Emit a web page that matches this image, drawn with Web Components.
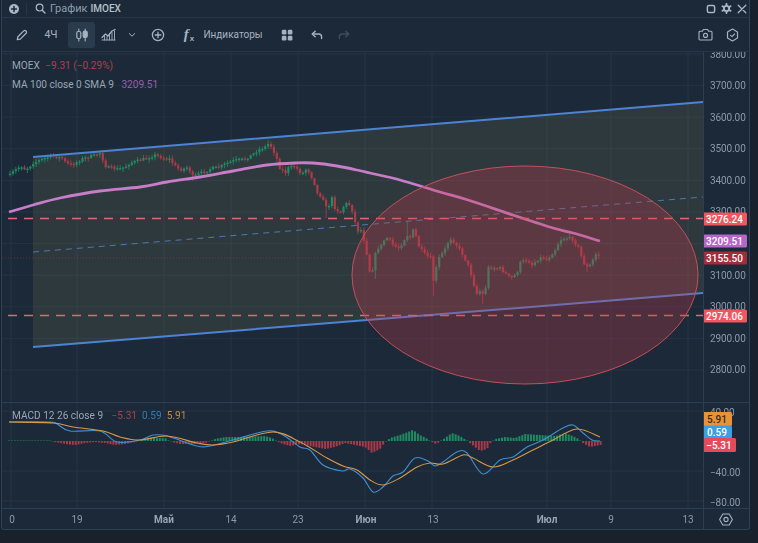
<!DOCTYPE html>
<html lang="ru"><head><meta charset="utf-8"><title>IMOEX</title>
<style>
html,body{margin:0;height:100%;background:#18212c;overflow:hidden}
body{padding-left:1px;box-sizing:border-box;font-family:Roboto,"Noto Sans",sans-serif}
</style></head><body>
<chart-window>
  <window-header slot="header"></window-header>
  <tool-bar slot="toolbar"></tool-bar>
  <main-pane slot="main"></main-pane>
  <macd-pane slot="macd"></macd-pane>
  <time-axis slot="time"></time-axis>
</chart-window>
<script>
const FONT='Roboto,"Noto Sans",sans-serif';
const ic=(w,h,body,extra='')=>`<svg width="${w}" height="${h}" viewBox="0 0 ${w} ${h}" fill="none" stroke="currentColor" stroke-linecap="round" stroke-linejoin="round" ${extra}>${body}</svg>`;
function shadow(el,html){el.attachShadow({mode:'open'}).innerHTML=html;}

const GRIDX=[11,77,164,231,298,365,432,547,611,688];
function smooth(p){
  let d=`M${p[0][0]} ${p[0][1]}`;
  for(let i=0;i<p.length-1;i++){
    const a=p[Math.max(i-1,0)],b=p[i],c=p[i+1],e=p[Math.min(i+2,p.length-1)];
    d+=`C${(b[0]+(c[0]-a[0])/6).toFixed(1)} ${(b[1]+(c[1]-a[1])/6).toFixed(1)} ${(c[0]-(e[0]-b[0])/6).toFixed(1)} ${(c[1]-(e[1]-b[1])/6).toFixed(1)} ${c[0]} ${c[1]}`;
  }
  return d;
}
function interp(pts,x){
  if(x<=pts[0][0])return pts[0][1];
  for(let i=1;i<pts.length;i++){if(x<=pts[i][0]){const a=pts[i-1],b=pts[i];return a[1]+(b[1]-a[1])*(x-a[0])/(b[0]-a[0]);}}
  return pts[pts.length-1][1];
}
const CLOSE=[[10,175],[14,171],[18,168],[21,166],[24,169],[28,168],[33,163],[40,160],[48,157],[50,156],[57,157],[62,158],[66,163],[72,165],[77,162],[82,159],[88,157],[95,155],[100,153],[103,160],[106,167],[112,168],[118,169],[125,167],[130,163],[140,160],[150,157],[155,155],[160,157],[167,159],[170,159],[174,165],[180,170],[188,167],[193,177],[200,173],[205,172],[212,168],[220,167],[225,164],[235,160],[245,159],[252,155],[258,150],[265,147],[269,143],[273,150],[276,156],[279,167],[282,170],[286,173],[288,168],[295,166],[298,170],[302,174],[307,168],[312,178],[315,185],[317,193],[323,198],[327,210],[332,198],[334,207],[340,213],[343,207],[348,202],[352,210],[354,217],[357,232],[360,228],[363,235],[365,247],[369,262],[370,277],[372,272],[375,255],[378,248],[382,245],[385,238],[388,238],[393,245],[398,248],[400,247],[407,235],[410,238],[414,228],[418,245],[423,252],[427,257],[430,253],[433,282],[437,265],[440,255],[443,253],[446,247],[450,238],[454,242],[458,247],[463,255],[468,265],[472,277],[474,285],[478,297],[481,287],[484,300],[488,268],[492,267],[495,268],[500,268],[505,273],[510,278],[513,277],[517,273],[520,263],[525,260],[530,262],[532,265],[537,260],[542,257],[547,260],[551,255],[555,250],[560,240],[565,238],[572,238],[574,242],[579,248],[583,262],[587,267],[590,265],[593,260],[596,254],[598,253],[601,260]];
const WICK={327:[0,218],407:[221,0],433:[0,296],484:[0,304],374:[0,279],269:[140,0],193:[0,181],587:[0,272]};
const MA=[[9,212],[33,205],[60,198],[100,191],[140,187],[167,182],[200,177],[233,171],[267,165],[295,163],[313,163],[337,166],[357,170],[370,173],[400,180],[440,192],[468,200],[513,215],[553,228],[573,233],[600,241]];
const BLUE=[[9,422],[50,422],[57,424],[70,431],[100,431],[117,442],[140,440],[153,435],[167,436],[197,446],[210,446],[233,440],[267,431],[283,435],[300,447],[310,450],[323,465],[342,471],[350,469],[363,478],[373,492],[383,487],[393,476],[403,472],[415,458],[428,461],[435,466],[443,462],[457,452],[467,453],[483,474],[500,460],[513,457],[527,447],[543,440],[563,428],[573,425],[583,433],[592,440],[600,441]];
const ORANGE=[[9,422],[53,423],[73,427],[103,431],[120,437],[140,440],[167,436],[197,443],[213,445],[233,442],[273,432],[300,442],[327,458],[343,466],[357,470],[370,480],[383,485],[400,478],[417,467],[430,463],[443,464],[463,455],[473,458],[493,467],[513,460],[533,450],[553,440],[577,429],[600,437]];
const HIST=[[9,.5],[45,.5],[50,.5],[55,-1],[65,-3],[75,-4],[85,-2],[95,-1],[105,-2],[115,-4],[125,-3],[135,-1],[140,1],[150,3],[165,3],[172,-1],[180,-3],[195,-3],[205,-2],[212,0],[215,2],[225,4],[240,4],[265,5],[272,3],[280,-2],[290,-5],[300,-3],[310,-5],[325,-8],[335,-6],[345,-2],[355,-4],[365,-6],[372,-12],[380,-8],[385,-1],[387,0],[390,3],[400,6],[413,11],[420,6],[428,2],[432,-1],[436,-3],[441,0],[445,3],[452,8],[460,5],[466,1],[470,-2],[480,-10],[487,-8],[491,-1],[495,2],[505,4],[515,3],[525,7],[540,6],[555,5],[565,8],[575,4],[580,1],[583,-2],[590,-6],[600,-4]];

function candles(){
  let seed=7;const rnd=()=>{seed=(seed*16807)%2147483647;return seed/2147483647;};
  let out='',prev=interp(CLOSE,9);
  for(let x=10;x<=601;x+=2.9){
    const c=interp(CLOSE,x)+(rnd()-.5)*2.6, o=prev;
    const up=c<=o, top=Math.min(o,c), bot=Math.max(o,c), h=Math.max(bot-top,1.4);
    const col=up?'#1f8c64':'#ad3a47';
    let wt=top-.6-rnd()*2.6, wb=top+h+.6+rnd()*2.6;
    const k=Object.keys(WICK).find(q=>Math.abs(q-x)<1.5);
    if(k){if(WICK[k][0])wt=WICK[k][0];if(WICK[k][1])wb=WICK[k][1];}
    out+=`<path d="M${x.toFixed(1)} ${wt.toFixed(1)}V${wb.toFixed(1)}" stroke="${col}" stroke-width=".8"/><rect x="${(x-1.1).toFixed(1)}" y="${top.toFixed(1)}" width="2.2" height="${h.toFixed(1)}" fill="${col}"/>`;
    prev=c;
  }
  return out;
}
function hist(){
  let out='';
  for(let x=9;x<=601;x+=2.9){
    const v=interp(HIST,x);
    const h=Math.max(Math.abs(v),.8),col=v>=0?'#1f8a62':'#a63a4a';
    out+=`<rect x="${(x-1).toFixed(1)}" y="${(v>=0?441-h:441).toFixed(1)}" width="2" height="${h.toFixed(1)}" fill="${col}" ${Math.abs(v)<1?'opacity=".6"':''}/>`;
  }
  return out;
}
const grid=(ys,y0,y1)=>GRIDX.map(x=>`<path d="M${x} ${y0}V${y1}"/>`).join('')+ys.map(y=>`<path d="M2 ${y}H703"/>`).join('');

class ChartWindow extends HTMLElement{constructor(){super();shadow(this,`<style>
:host{display:grid;box-sizing:border-box;width:749px;height:530px;background:#1c2938;border:1px solid #2c4258;border-width:0 1px 1px 1px;border-radius:0 0 3px 3px;
grid-template-rows:18px 34px 351px 106px 20px;font:10px ${FONT};color:#98a8b6;overflow:hidden;filter:blur(.4px)}
</style><slot name="header"></slot><slot name="toolbar"></slot><slot name="main"></slot><slot name="macd"></slot><slot name="time"></slot>`);}}
customElements.define('chart-window',ChartWindow);

class WindowHeader extends HTMLElement{constructor(){super();shadow(this,`<style>
:host{display:flex;align-items:center;border-bottom:1px solid #26374a;box-sizing:border-box;padding:0 0 0 6px;color:#a9b7c4}
.sep{width:1px;height:12px;background:#26374a;margin:0 8px 0 6px}
.t{font-size:11px;color:#8e9eac;margin-left:4px}.b{font-weight:500;font-size:10px;color:#b4c1cd;margin-left:3px}
.sp{flex:1}.i{display:flex;width:15px;justify-content:center}svg{display:block}
</style>
${ic(12,12,'<circle cx="6" cy="6" r="5" fill="currentColor" stroke="none"/><path d="M6 3.600v4.800M3.600 6h4.800" stroke="#1c2938" stroke-width="1.500"/>')}
<span class="sep"></span>
${ic(11,11,'<circle cx="4.600" cy="4.600" r="3.400" stroke-width="1.200"/><path d="M7.200 7.200l2.800 2.800" stroke-width="1.400"/>')}
<span class="t">График</span><span class="b">IMOEX</span><span class="sp"></span>
<span class="i">${ic(10,10,'<rect x="1.400" y="1.400" width="7.200" height="7.200" rx="1.600" stroke-width="1.500"/>')}</span>
<span class="i" style="margin-left:1px">${ic(11,11,'<circle cx="5.500" cy="5.500" r="2.600" stroke-width="1.900"/><path d="M5.500 .9v1.500M5.500 8.600v1.500M1.500 3.200l1.300.8M8.200 7l1.300.8M1.500 7.800l1.300-.8M8.200 4l1.300-.8" stroke-width="1.900"/>')}</span>
<span class="i" style="margin-left:0">${ic(10,10,'<path d="M1.200 1.200l7.600 7.600M8.800 1.200L1.200 8.800" stroke-width="1.300"/>')}</span>`);}}
customElements.define('window-header',WindowHeader);

class ToolBtn extends HTMLElement{constructor(){super();shadow(this,`<style>
:host{display:flex;align-items:center;justify-content:center;height:26px;border-radius:3px;color:#a4b3c1;font:10px ${FONT}}
:host([active]){background:#2a3b4d}
:host([dim]){color:#3d4e5f}
svg{display:block}
</style><slot></slot>`);}}
customElements.define('tool-btn',ToolBtn);

class ToolBar extends HTMLElement{constructor(){super();shadow(this,`<style>
:host{display:flex;align-items:center;border-bottom:1px solid #26374a;box-sizing:border-box;padding-left:7px;padding-right:4px}
.fx{font:italic 700 15px "Liberation Serif",serif;letter-spacing:0}
.fx small{font:700 8px "Liberation Sans",sans-serif;vertical-align:-2px;margin-left:1px}
.sp{flex:1}
</style>
<tool-btn style="width:26px">${ic(14,14,'<path d="M2.300 11.700l.6-3L8.700 2.900a1.700 1.700 0 0 1 2.400 2.400L5.300 11.100z" stroke-width="1.300"/>')}</tool-btn>
<tool-btn style="width:26px;margin-left:3px;font-size:10.500px">4Ч</tool-btn>
<tool-btn active style="width:27px;margin-left:4px">${ic(14,14,'<path d="M3.800 1v2.500M3.800 10.500V13M10.200 1v2M10.200 9.500V13" stroke-width="1.100"/><rect x="1.800" y="3.500" width="4" height="7" rx="1.400" stroke-width="1.200"/><rect x="8.200" y="3" width="4" height="6.500" rx="1.400" fill="currentColor" stroke-width="1.200"/>')}</tool-btn>
<tool-btn style="width:26px">${ic(15,13,'<path d="M1 9.500L4.500 6l2.500 2L11 3l3-1.500" stroke-width="1.300"/><path d="M1 12h13M3.500 8v4M6 8.500V12M8.500 6v6M11 4.500V12M13.500 3v9" stroke-width=".9"/>')}</tool-btn>
<tool-btn style="width:16px;margin-left:3px">${ic(8,6,'<path d="M1.300 1.600L4 4.200l2.700-2.600" stroke-width="1"/>')}</tool-btn>
<tool-btn style="width:26px;margin-left:5px">${ic(14,14,'<circle cx="7" cy="7" r="5.600" stroke-width="1.300"/><path d="M7 4.200v5.600M4.200 7h5.600" stroke-width="1.300"/>')}</tool-btn>
<tool-btn style="width:26px;margin-left:5px"><span class="fx">f<small>x</small></span></tool-btn>
<tool-btn style="width:58px;margin-left:2px;font-size:10px">Индикаторы</tool-btn>
<tool-btn style="width:26px;margin-left:12px">${ic(12,12,'<rect x=".8" y=".8" width="4.600" height="4.600" rx="1.200" fill="currentColor" stroke="none"/><rect x="6.800" y=".8" width="4.600" height="4.600" rx="1.200" fill="currentColor" stroke="none"/><rect x=".8" y="6.800" width="4.600" height="4.600" rx="1.200" fill="currentColor" stroke="none"/><rect x="6.800" y="6.800" width="4.600" height="4.600" rx="1.200" fill="currentColor" stroke="none"/>')}</tool-btn>
<tool-btn style="width:26px;margin-left:4px">${ic(12,10,'<path d="M4.200 1.200L1.200 4l3 2.800" stroke-width="1.400"/><path d="M1.600 4h6a3 3 0 0 1 3 3v1.600" stroke-width="1.400"/>')}</tool-btn>
<tool-btn dim style="width:26px;margin-left:1px">${ic(12,10,'<path d="M7.800 1.200l3 2.800-3 2.800" stroke-width="1.400"/><path d="M10.400 4h-6a3 3 0 0 0-3 3v1.600" stroke-width="1.400"/>')}</tool-btn>
<span class="sp"></span>
<tool-btn style="width:26px">${ic(15,13,'<path d="M1 4.200a1 1 0 0 1 1-1h2.400l1-1.700h4.200l1 1.700H13a1 1 0 0 1 1 1v6.800a1 1 0 0 1-1 1H2a1 1 0 0 1-1-1z" stroke-width="1.100"/><circle cx="7.500" cy="7.400" r="2" stroke-width="1.100"/>')}</tool-btn>
<tool-btn style="width:26px;margin-left:1px">${ic(13,14,'<path d="M6.500 1l5 2.900v6.200l-5 2.900-5-2.900V3.900z" stroke-width="1.200"/><path d="M4.500 7.300l1.500 1.300 2.600-2.600" stroke-width="1.100"/>')}</tool-btn>`);}}
customElements.define('tool-bar',ToolBar);

class PriceTag extends HTMLElement{constructor(){super();shadow(this,`<style>
:host{position:absolute;left:-2px;display:flex;align-items:center;justify-content:center;box-sizing:border-box;height:13px;width:45px;border-radius:1.5px;
background:var(--bg);color:var(--fg,#fff);font:500 10px ${FONT};transform:translateY(-50%)}
</style><slot></slot>`);}}
customElements.define('price-tag',PriceTag);

class AxisScale extends HTMLElement{constructor(){super();shadow(this,`<style>
:host{display:block;position:relative;border-left:1px solid #2b3e52;overflow:hidden;font:10px ${FONT};color:#8a9aa9}
.rows{display:grid;grid-auto-rows:var(--row);margin-top:var(--off);padding-left:6px;letter-spacing:-.1px}
.rows span{display:flex;align-items:center;height:100%}
</style><div class="rows"></div><slot></slot>`);
}
connectedCallback(){this.shadowRoot.querySelector('.rows').innerHTML=(this.getAttribute('labels')||'').split('|').map(t=>`<span>${t}</span>`).join('');}}
customElements.define('axis-scale',AxisScale);

class ChartLegend extends HTMLElement{constructor(){super();shadow(this,`<style>
:host{position:absolute;left:10px;top:var(--top);display:grid;row-gap:5px;font:10.100px/14px ${FONT};color:#97a7b5;pointer-events:none}
</style><slot></slot>`);}}
customElements.define('chart-legend',ChartLegend);

class MainPane extends HTMLElement{constructor(){super();
const ys=[54,85.6,117.2,148.8,180.4,212,243.6,275.2,306.8,338.4,370];
const [ax,bx]=[33,703];
shadow(this,`<style>
:host{display:grid;grid-template-columns:701px 46px;border-bottom:1px solid #2b3e52;box-sizing:border-box;overflow:hidden}
.c{position:relative;height:350px;overflow:hidden}svg{display:block}
s{text-decoration:none;margin-left:3px}
</style>
<div class="c">
<svg width="701" height="350" viewBox="2 52 701 350">
<g stroke="#243445" stroke-width="1" fill="none">${grid(ys,52,402)}</g>
<path d="M${ax} 157L${bx} 102V293L${ax} 347Z" fill="#7d7f58" fill-opacity=".19"/>
<g fill="none">${candles()}</g>
<path d="M${ax} 252L${bx} 197" stroke="#4f78ad" stroke-width="1" stroke-dasharray="6 5" fill="none"/>
<path d="M${ax} 157L${bx} 102M${ax} 347L${bx} 293" stroke="#4d83d6" stroke-width="2" fill="none"/>
<path d="${smooth(MA)}" fill="none" stroke="#c87dc9" stroke-width="2.800" stroke-linejoin="round"/>
<path d="M8 218.500H703M8 315.500H703" stroke="#e2676f" stroke-width="1.600" stroke-dasharray="9 7" fill="none"/>
<ellipse cx="525" cy="275" rx="173" ry="109" fill="#c83c4c" fill-opacity=".3" stroke="#c2505a" stroke-width="1"/>
<path d="M2 258H703" stroke="#b83c48" stroke-width=".8" stroke-dasharray="1 2" fill="none" opacity=".6"/>
</svg>
<chart-legend style="--top:7px">
<span>MOEX <s style="color:#a9424f">−9.31 (−0.29%)</s></span>
<span>MA 100 close 0 SMA 9 <s style="color:#9460ad;margin-left:5px">3209.51</s></span>
</chart-legend>
</div>
<axis-scale style="--row:31.6px;--off:-13.8px" labels="3800.00|3700.00|3600.00|3500.00|3400.00|3300.00|3200.00|3100.00|3000.00|2900.00|2800.00">
<price-tag style="--bg:#f1565f;top:167px">3276.24</price-tag>
<price-tag style="--bg:#b666c9;top:189px">3209.51</price-tag>
<price-tag style="--bg:#a32c3a;top:206px">3155.50</price-tag>
<price-tag style="--bg:#f1565f;top:263.500px">2974.06</price-tag>
</axis-scale>`);}}
customElements.define('main-pane',MainPane);

class MacdPane extends HTMLElement{constructor(){super();
shadow(this,`<style>
:host{display:grid;grid-template-columns:701px 46px;border-bottom:1px solid #2b3e52;box-sizing:border-box;overflow:hidden}
.c{position:relative;height:105px;overflow:hidden}svg{display:block}
s{text-decoration:none;margin-left:5px}
</style>
<div class="c">
<svg width="701" height="105" viewBox="2 403 701 105">
<g stroke="#243445" stroke-width="1" fill="none">${grid([411,471,501],403,508)}</g>
${hist()}
<path d="${smooth(BLUE)}" fill="none" stroke="#3f8fd0" stroke-width="1.100" stroke-linejoin="round"/>
<path d="${smooth(ORANGE)}" fill="none" stroke="#d8994a" stroke-width="1.100" stroke-linejoin="round"/>
</svg>
<chart-legend style="--top:6px">
<span>MACD 12 26 close 9 <s style="color:#a9424f;margin-left:6px">−5.31</s><s style="color:#2f7fbb">0.59</s><s style="color:#c48b40">5.91</s></span>
</chart-legend>
</div>
<axis-scale style="--row:30px;--off:-6px" labels="40.00||−40.00|−80.00">
<price-tag style="--bg:#e8923a;--fg:#3a2a14;width:30px;top:16px;height:14px">5.91</price-tag>
<price-tag style="--bg:#3a9fe6;width:30px;top:29px;height:13px">0.59</price-tag>
<price-tag style="--bg:#e24b5c;width:34px;top:42px;height:14px">−5.31</price-tag>
</axis-scale>`);}}
customElements.define('macd-pane',MacdPane);

class TimeAxis extends HTMLElement{constructor(){super();
const t=[['0',12],['19',77],['Май',164,1],['14',231],['23',298],['Июн',366,1],['13',433],['Июл',547,1],['9',611],['13',688]];
const cells=t.map((v,i)=>{const w=(i<t.length-1?t[i+1][1]:703-2)-v[1];return `<div class="k" style="flex:0 0 ${w}px"><span class="${v[2]?'b':''}">${v[0]}</span></div>`;}).join('');
shadow(this,`<style>
:host{display:grid;grid-template-columns:701px 46px;font:10px ${FONT};color:#8a9aa9;overflow:hidden}
.t{display:flex;align-items:center;padding:1px 0 0 10px;box-sizing:border-box;overflow:hidden}
.k{height:100%;display:flex;align-items:center}
.k span{display:block;flex:0 0 40px;margin-left:-20px;text-align:center}.b{font-weight:700;color:#96a5b3}
.s{border-left:1px solid #2b3e52;display:flex;align-items:center;justify-content:center;color:#a4b3c1;padding-right:1px}
</style><div class="t">${cells}</div>
<div class="s">${ic(14,13,'<path d="M3.800 1h6.400l3.200 5.500-3.200 5.500H3.800L.6 6.500z" stroke-width="1.100"/><circle cx="7" cy="6.500" r="2.100" stroke-width="1.100"/>')}</div>`);}}
customElements.define('time-axis',TimeAxis);
</script>
</body></html>
